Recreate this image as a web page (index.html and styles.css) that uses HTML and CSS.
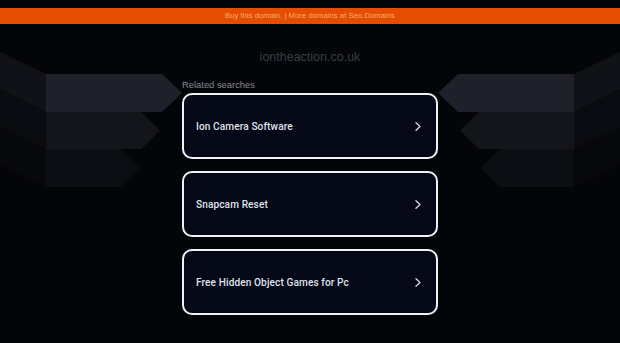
FILE: index.html
```html
<!DOCTYPE html>
<html>
<head>
<meta charset="utf-8">
<title>iontheaction.co.uk</title>
<link rel="stylesheet" href="styles.css">
</head>
<body>
<div class="page">
  <svg class="backdrop" width="620" height="343" viewBox="0 0 620 343" aria-hidden="true">
    <g id="wing">
      <polygon points="0,52 46,74 46,112 0,89" fill="#111218"/>
      <polygon points="0,89 46,112 46,149 0,127" fill="#0b0c11"/>
      <polygon points="0,127 46,149 46,187 0,165" fill="#07080c"/>
      <polygon points="46,74 162,74 182,93 162,112 46,112" fill="#1f2029"/>
      <polygon points="46,112 141,112 160,130.5 141,149 46,149" fill="#14151b"/>
      <polygon points="46,149 120,149 139,168 120,187 46,187" fill="#0d0e13"/>
    </g>
    <use href="#wing" transform="translate(620,0) scale(-1,1)"/>
  </svg>
  <div class="content">
    <div class="promo">Buy this domain. | More domains at Seo.Domains</div>
    <div class="domain">iontheaction.co.uk</div>
    <div class="searches">
      <div class="label">Related searches</div>
      <div class="list">
        <a class="card" href="#"><span>Ion Camera Software</span><svg class="chev" width="6" height="9" viewBox="0 0 6 9"><polyline points="1,0.8 5,4.5 1,8.2"/></svg></a>
        <a class="card" href="#"><span>Snapcam Reset</span><svg class="chev" width="6" height="9" viewBox="0 0 6 9"><polyline points="1,0.8 5,4.5 1,8.2"/></svg></a>
        <a class="card" href="#"><span>Free Hidden Object Games for Pc</span><svg class="chev" width="6" height="9" viewBox="0 0 6 9"><polyline points="1,0.8 5,4.5 1,8.2"/></svg></a>
      </div>
    </div>
  </div>
</div>
</body>
</html>
```

FILE: styles.css
```css
html, body {
  margin: 0;
  padding: 0;
  background: #040509;
}
body {
  font-family: "Liberation Sans", Arial, sans-serif;
  width: 620px;
  height: 343px;
  overflow: hidden;
}
.page {
  position: relative;
  width: 620px;
  height: 343px;
  background: #040509;
}
.backdrop {
  position: absolute;
  left: 0;
  top: 0;
  z-index: 0;
}
.content {
  position: relative;
  z-index: 1;
  padding-top: 8px;
  display: flex;
  flex-direction: column;
  align-items: center;
}
.promo {
  align-self: stretch;
  height: 16px;
  line-height: 16px;
  background: #e44d02;
  color: #f7ad68;
  font-size: 7.75px;
  text-align: center;
}
.domain {
  margin-top: 26px;
  line-height: 15px;
  font-size: 12.5px;
  color: #3a3d45;
}
.searches {
  width: 256px;
  margin-top: 14px;
}
.label {
  font-size: 9.4px;
  line-height: 11px;
  color: #868992;
}
.list {
  margin-top: 3px;
  display: flex;
  flex-direction: column;
  gap: 12px;
}
.card {
  box-sizing: border-box;
  height: 66px;
  border: 2px solid #f0f1f4;
  border-radius: 10px;
  background: #050816;
  display: flex;
  align-items: center;
  justify-content: space-between;
  padding: 0 15px 0 12px;
  text-decoration: none;
  color: #dfe2ea;
  font-family: Roboto, "Liberation Sans", Arial, sans-serif;
  font-size: 10.1px;
  font-weight: 500;
  letter-spacing: 0.1px;
}
.chev polyline {
  fill: none;
  stroke: #d9dce4;
  stroke-width: 1.3;
  stroke-linecap: round;
  stroke-linejoin: round;
}
```
